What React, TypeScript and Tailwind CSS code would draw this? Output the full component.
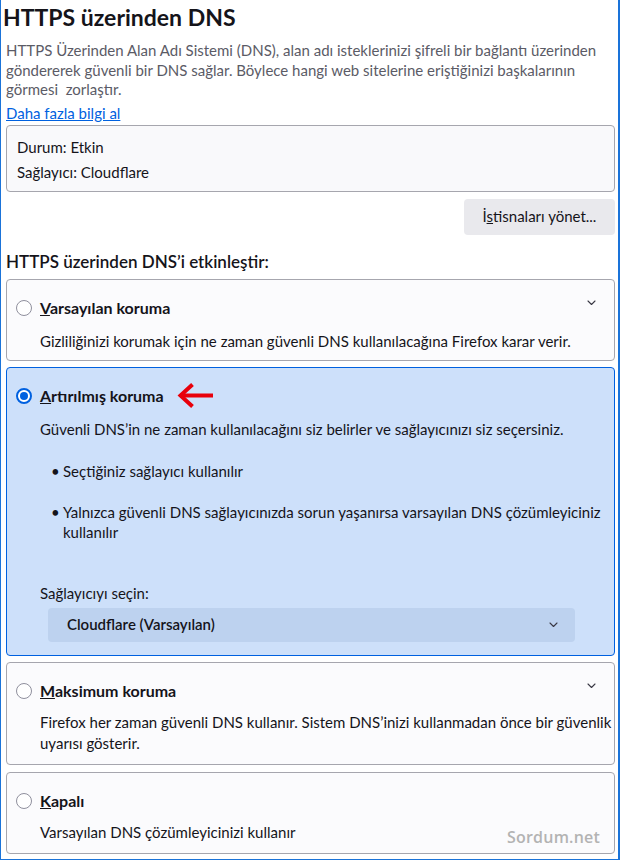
import type { ReactNode } from 'react'

const sans = "font-['Lato','Noto_Sans',sans-serif]"

function Radio({ checked }: { checked?: boolean }) {
  if (checked) {
    return (
      <span className="flex h-[16px] w-[16px] shrink-0 items-center justify-center rounded-full border-2 border-[#0061e0] bg-white">
        <span className="h-[8px] w-[8px] rounded-full bg-[#0061e0]" />
      </span>
    )
  }
  return <span className="h-[16px] w-[16px] shrink-0 rounded-full border border-[#8f8f9d] bg-white" />
}

function Chevron({ className = '' }: { className?: string }) {
  return (
    <svg width="9" height="6" viewBox="0 0 9 6" className={className}>
      <path d="M1 1l3.5 3.5L8 1" fill="none" stroke="#3a3944" strokeWidth="1.1" strokeLinecap="round" strokeLinejoin="round" />
    </svg>
  )
}

function RedArrow() {
  return (
    <svg width="36" height="27" viewBox="0 0 36 27" className="ml-[13px] shrink-0">
      <path d="M4 13.5H36" stroke="#e8000b" strokeWidth="4" />
      <path d="M15.5 2.5L3.5 13.5L15.5 24.5" fill="none" stroke="#e8000b" strokeWidth="4" />
    </svg>
  )
}

type OptionProps = {
  accessKey: string
  rest: string
  checked?: boolean
  chevron?: boolean
  arrow?: boolean
  className?: string
  children: ReactNode
}

function Option({ accessKey, rest, checked, chevron, arrow, className = '', children }: OptionProps) {
  return (
    <div
      className={`relative overflow-hidden rounded-[4px] border ${
        checked ? 'border-[#0061e0] bg-[#cde0fa]' : 'border-[#a6a6ae] bg-[#fbfbfd]'
      } ${className}`}
    >
      <div className="mt-[18px] flex h-[20px] items-center pl-[9px] pr-[18px]">
        <Radio checked={checked} />
        <span className="ml-[8px] text-[16px] font-bold text-[#15141a]">
          <u>{accessKey}</u>
          {rest}
        </span>
        {arrow && <RedArrow />}
        {chevron && <Chevron className="ml-auto -translate-y-[5px]" />}
      </div>
      <div className="pl-[33px] text-[15px] text-[#15141a]">{children}</div>
    </div>
  )
}

export default function App() {
  return (
    <div className={`${sans} h-[860px] w-[620px] overflow-hidden border-b border-l border-r-2 border-[#1a73d9] bg-white`}>
      <div className="pl-[5px] pr-[3px]">
        <h1 className="-ml-[3px] mt-[3px] text-[23px] font-bold leading-[28px] text-[#15141a]">HTTPS üzerinden DNS</h1>

        <p className="mt-[10px] text-[15px] leading-[19.5px] text-[#5b5b66]">
          HTTPS Üzerinden Alan Adı Sistemi (DNS), alan adı isteklerinizi şifreli bir bağlantı üzerinden
          <br />
          göndererek güvenli bir DNS sağlar. Böylece hangi web sitelerine eriştiğinizi başkalarının
          <br />
          görmesi&nbsp; zorlaştır.
        </p>
        <a href="#" className="mt-[3px] block w-fit text-[15px] leading-[20px] text-[#0061e0] underline">
          Daha fazla bilgi al
        </a>

        <div className="mt-[2px] rounded-[4px] border border-[#a6a6ae] bg-[#f9f9fb] pb-[9px] pl-[10px] pt-[11px] text-[15px] leading-[20px] text-[#15141a]">
          <div>Durum: Etkin</div>
          <div className="mt-[5px]">Sağlayıcı: Cloudflare</div>
        </div>

        <div className="mt-[7px] flex justify-end">
          <button className="h-[36px] w-[151px] rounded-[4px] bg-[#e9e9ed] text-[15px] text-[#15141a]">
            İ<u>s</u>tisnaları yönet...
          </button>
        </div>

        <h2 className="mt-[16px] text-[17px] font-semibold leading-[22px] text-[#15141a]">
          HTTPS üzerinden DNS’i etkinleştir:
        </h2>

        <div className="mt-[6px] flex flex-col gap-[6px]">
          <Option accessKey="V" rest="arsayılan koruma" chevron>
            <p className="mb-[9px] mt-[13px] leading-[20px]">
              Gizliliğinizi korumak için ne zaman güvenli DNS kullanılacağına Firefox karar verir.
            </p>
          </Option>

          <Option accessKey="A" rest="rtırılmış koruma" checked arrow>
            <p className="mt-[13px] leading-[20px]">
              Güvenli DNS’in ne zaman kullanılacağını siz belirler ve sağlayıcınızı siz seçersiniz.
            </p>
            <ul className="mt-[22px] flex flex-col gap-[21px] pl-[11px]">
              <li className="flex leading-[20px]">
                <span className="w-[12px] shrink-0">•</span>
                <span>Seçtiğiniz sağlayıcı kullanılır</span>
              </li>
              <li className="flex leading-[20.5px]">
                <span className="w-[12px] shrink-0">•</span>
                <span>
                  Yalnızca güvenli DNS sağlayıcınızda sorun yaşanırsa varsayılan DNS çözümleyiciniz
                  <br />
                  kullanılır
                </span>
              </li>
            </ul>
            <p className="mt-[40px] leading-[20px]">Sağlayıcıyı seçin:</p>
            <div className="mb-[13px] ml-[8px] mt-[5px] flex h-[34px] w-[527px] items-center justify-between rounded-[4px] bg-[#bdd2ef] pl-[19px] pr-[17px]">
              <span className="font-semibold text-[#15141a]">Cloudflare (Varsayılan)</span>
              <Chevron />
            </div>
          </Option>

          <Option accessKey="M" rest="aksimum koruma" chevron>
            <div className="mb-[10px] mt-[11px] whitespace-nowrap leading-[21px]">
              <div>Firefox her zaman güvenli DNS kullanır. Sistem DNS’inizi kullanmadan önce bir güvenlik riski</div>
              <div>uyarısı gösterir.</div>
            </div>
          </Option>

          <Option accessKey="K" rest="apalı" className="mt-[1px]">
            <p className="mb-[11px] mt-[11px] leading-[20px]">Varsayılan DNS çözümleyicinizi kullanır</p>
            <span className="absolute bottom-[4px] right-[14px] font-['Open_Sans',sans-serif] text-[16px] font-semibold tracking-[0.2px] text-[#b3b3b3]">
              Sordum.net
            </span>
          </Option>
        </div>
      </div>
    </div>
  )
}
